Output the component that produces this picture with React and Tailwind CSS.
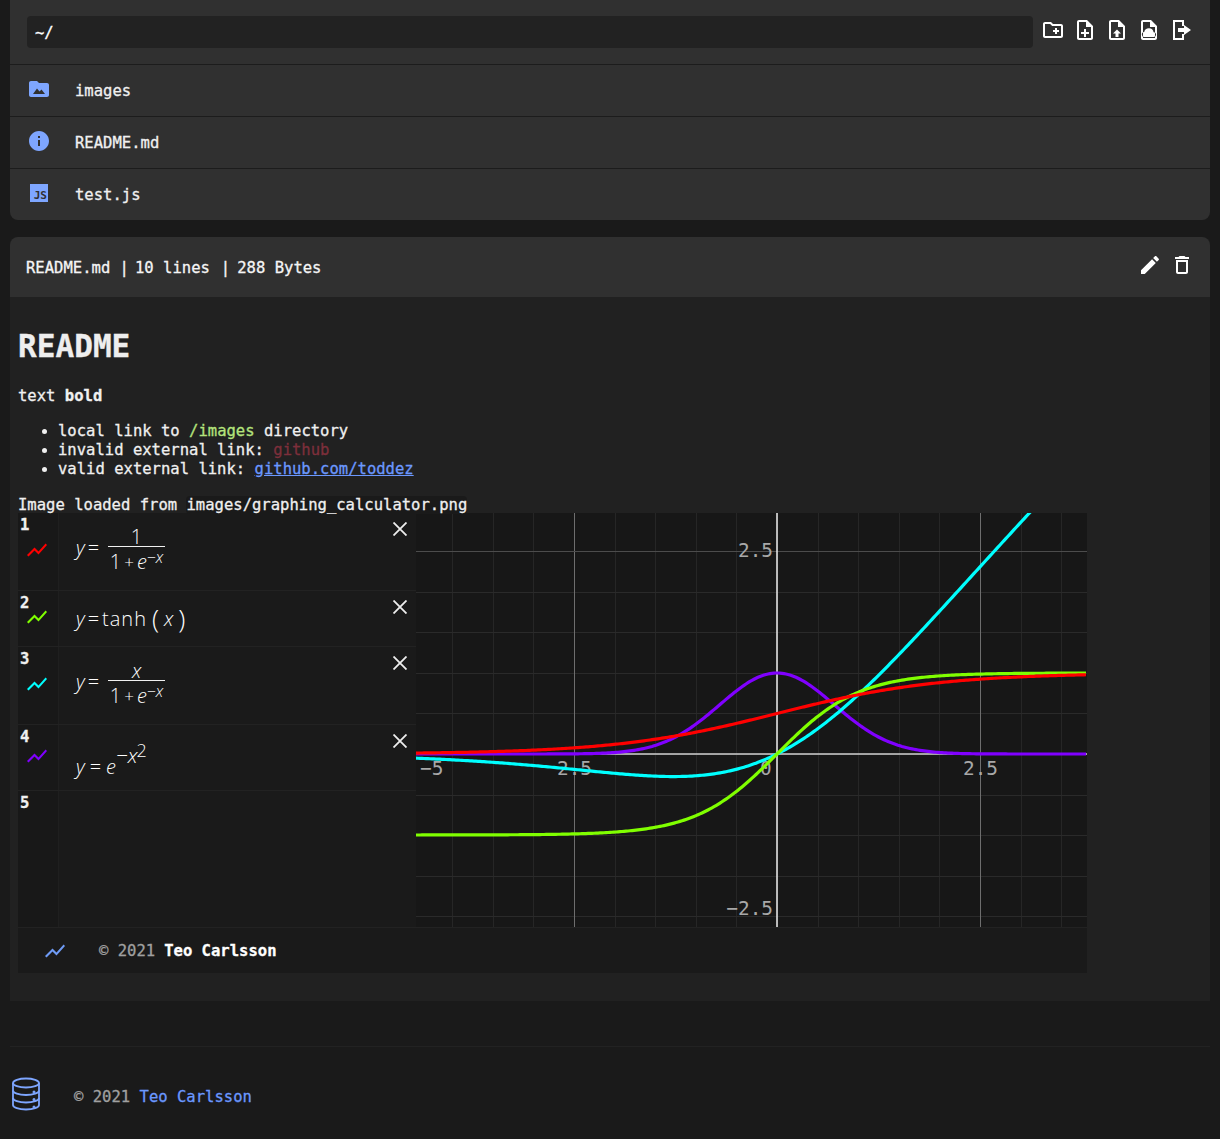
import React from 'react';

const FOLDER_ADD = 'M20 6h-8l-2-2H4c-1.11 0-1.99.89-1.99 2L2 18c0 1.11.89 2 2 2h16c1.11 0 2-.89 2-2V8c0-1.11-.89-2-2-2zm0 12H4V6h5.17l2 2H20v10zm-8-4h2v2h2v-2h2v-2h-2v-2h-2v2h-2z';
const FILE_OUTLINE = 'M14 2H6c-1.1 0-2 .9-2 2v16c0 1.1.89 2 1.99 2H18c1.1 0 2-.9 2-2V8l-6-6zm4 18H6V4h7v5h5v11z';
const PLUS_SMALL = 'M13 11h-2v3H8v2h3v3h2v-3h3v-2h-3z';
const ARROW_UP = 'M12 11.5l-4 4h2.5V19h3v-3.5H16z';
const CLOUD = 'M7.5 19a2.5 2.5 0 0 1-.3-5 4.8 4.8 0 0 1 9.4.2 2.4 2.4 0 0 1 .2 4.8z';
const LOGOUT = 'M4 2h11v6h-2V4H6v16h7v-4h2v6H4zM15 7l7 5-7 5v-3H9v-4h6z';
const EDIT = 'M3 17.25V21h3.75L17.81 9.94l-3.75-3.75L3 17.25zM20.71 7.04c.39-.39.39-1.02 0-1.41l-2.34-2.34c-.39-.39-1.02-.39-1.41 0l-1.83 1.83 3.75 3.75 1.83-1.83z';
const TRASH = 'M6 19c0 1.1.9 2 2 2h8c1.1 0 2-.9 2-2V7H6v12zM8 9h8v10H8V9zm7.5-5l-1-1h-5l-1 1H5v2h14V4z';
const FOLDER = 'M10 4H4c-1.1 0-2 .9-2 2v12c0 1.1.9 2 2 2h16c1.1 0 2-.9 2-2V8c0-1.1-.9-2-2-2h-8l-2-2z';
const INFO = 'M12 2C6.48 2 2 6.48 2 12s4.48 10 10 10 10-4.48 10-10S17.52 2 12 2zm1 15h-2v-6h2v6zm0-8h-2V7h2v2z';
const SHOW_CHART = 'M3.5 18.49l6-6.01 4 4L22 6.92l-1.41-1.41-7.09 7.97-4-4L2 16.99z';

const Icon = ({ d, className = 'w-6 h-6 text-white' }) => (
  <svg viewBox="0 0 24 24" fill="currentColor" className={className}>
    <path d={d} />
  </svg>
);

const FileRow = ({ icon, name, last }) => (
  <div className={`flex items-center pl-[17px] ${last ? 'h-[51px]' : 'h-[52px] border-b border-[#1c1c1c]'}`}>
    <div className="w-6 h-6 mr-6 mb-[3px] flex items-center justify-center">{icon}</div>
    <span className="pt-[2px] text-[#f0f0f0]">{name}</span>
  </div>
);

const Var = ({ children }) => <i className="italic">{children}</i>;

const Frac = ({ top, bottom }) => (
  <div className="flex flex-col items-center w-[57px] ml-[9px]">
    <div className="h-[23px] leading-[26px] border-b border-[#f0f0f0] w-full text-center">{top}</div>
    <div className="h-[25px] pt-[2px] leading-[25px] flex items-start">{bottom}</div>
  </div>
);

const Denominator = () => (
  <>
    <span>1</span>
    <span className="mx-[3px] text-[17px]">+</span>
    <Var>e</Var>
    <span className="text-[16px] leading-[17px] italic">−x</span>
  </>
);

const Formula = ({ n, color, height, children }) => (
  <div className="flex border-b border-[#222222]" style={{ height }}>
    <div className="relative w-[41px] shrink-0 flex items-center justify-center bg-[#181818] border-r border-[#1f1f1f]">
      <span className="absolute left-[2px] top-[2px] font-bold leading-5 text-[#f0f0f0]">{n}</span>
      {color && (
        <svg viewBox="0 0 24 24" fill={color} className="w-[24px] h-[24px] mb-[3px] mr-[2px]">
          <path d={SHOW_CHART} />
        </svg>
      )}
    </div>
    <div className="relative flex-1 flex items-center pl-[17px] text-[20px] font-light text-white [-webkit-text-stroke:0px] [font-family:'Open_Sans',sans-serif]">
      {children}
      {color && (
        <svg viewBox="0 0 14 14" className="absolute right-[9px] top-[9px] w-[14px] h-[14px]" stroke="#eeeeee" strokeWidth="1.8">
          <path d="M0.5 0.5L13.5 13.5M13.5 0.5L0.5 13.5" />
        </svg>
      )}
    </div>
  </div>
);

// chart geometry, in px inside the 671x414 plot
const W = 671;
const H = 414;
const X0 = 361;
const Y0 = 241;
const UNIT = 81.2;

const curve = (fn) => {
  const pts = [];
  for (let px = 0; px <= W; px += 2) {
    const x = (px - X0) / UNIT;
    pts.push(`${px},${(Y0 - fn(x) * 81).toFixed(2)}`);
  }
  return pts.join(' ');
};

const gridXs = Array.from({ length: 18 }, (_, i) => Math.round(X0 + (i - 9) * 40.6) + 0.5).filter((x) => x > 0 && x < W);
const gridYs = Array.from({ length: 11 }, (_, i) => Math.round(38 + i * 40.6 - 40.6) + 0.5);

const Chart = () => (
  <svg width={W} height={H} viewBox={`0 0 ${W} ${H}`} className="block shrink-0 bg-[#171717] [-webkit-text-stroke:0px]">
    {gridXs.map((x) => (
      <line key={x} x1={x} x2={x} y1="0" y2={H} stroke="#262626" />
    ))}
    {gridYs.map((y) => (
      <line key={y} x1="0" x2={W} y1={y} y2={y} stroke="#2a2a2a" />
    ))}
    <line x1="158.5" x2="158.5" y1="0" y2={H} stroke="#6e6e6e" />
    <line x1="564.5" x2="564.5" y1="0" y2={H} stroke="#6e6e6e" />
    <line x1="0" x2={W} y1="38.5" y2="38.5" stroke="#4c4c4c" />
    <line x1="0" x2={W} y1={Y0} y2={Y0} stroke="#d0d0d0" strokeWidth="1.5" />
    <line x1={X0} x2={X0} y1="0" y2={H} stroke="#f0f0f0" strokeWidth="1.5" />
    <g fill="#a8a8a8" fontSize="19.4" fontFamily="'DejaVu Sans Mono', monospace">
      <text x="357" y="44" textAnchor="end">2.5</text>
      <text x="357" y="402" textAnchor="end">−2.5</text>
      <text x="4" y="262">−5</text>
      <text x="141" y="262">2.5</text>
      <text x="344" y="262">0</text>
      <text x="547" y="262">2.5</text>
    </g>
    <g fill="none" strokeWidth="3.2">
      <polyline points={curve((x) => Math.exp(-x * x))} stroke="#8000ff" />
      <polyline points={curve((x) => x / (1 + Math.exp(-x)))} stroke="#00ffff" />
      <polyline points={curve((x) => Math.tanh(x))} stroke="#80ff00" />
      <polyline points={curve((x) => 1 / (1 + Math.exp(-x)))} stroke="#ff0000" />
    </g>
  </svg>
);

const App = () => (
  <div className="min-h-[1139px] bg-[#1a1a1a] px-[10px] text-[15.56px] leading-[19px] text-[#f0f0f0] [-webkit-text-stroke:0.3px] [font-family:'DejaVu_Sans_Mono',monospace]">
    <div className="bg-[#303030] rounded-b-lg">
      <div className="flex items-center gap-2 h-[65px] pl-[17px] pr-[17px] border-b border-[#1c1c1c]">
        <div className="flex-1 h-8 flex items-center px-2 pt-[2px] bg-[#222222] rounded text-white">~/</div>
        <div className="flex gap-2 mb-1">
          <Icon d={FOLDER_ADD} />
          <Icon d={`${FILE_OUTLINE}${PLUS_SMALL}`} />
          <Icon d={`${FILE_OUTLINE}${ARROW_UP}`} />
          <Icon d={`${FILE_OUTLINE}${CLOUD}`} />
          <Icon d={LOGOUT} />
        </div>
      </div>
      <FileRow
        name="images"
        icon={
          <svg viewBox="0 0 24 24" className="w-6 h-6">
            <path d={FOLDER} fill="#7ea6ff" />
            <path d="M6 17l4-5.5 2.5 3 2-2 3.5 4.5z" fill="#303030" />
          </svg>
        }
      />
      <FileRow name="README.md" icon={<Icon d={INFO} className="w-6 h-6 text-[#7ea6ff]" />} />
      <FileRow
        name="test.js"
        last
        icon={
          <div className="w-[18px] h-[18px] bg-[#7ea6ff] flex items-end justify-end pr-[1px] text-[11px] leading-[12px] font-bold text-[#303030] [-webkit-text-stroke:0px]">
            JS
          </div>
        }
      />
    </div>

    <div className="mt-[17px]">
      <div className="flex items-center justify-between h-[60px] pl-4 pr-4 bg-[#303030] rounded-t-lg">
        <span className="pt-[2px] text-[#f5f5f5]">
          README.md |<span className="ml-[6px]">10 lines</span>
          <span className="ml-[11px]">|</span>
          <span className="ml-[7px]">288 Bytes</span>
        </span>
        <div className="flex gap-2 mb-1">
          <Icon d={EDIT} />
          <Icon d={TRASH} />
        </div>
      </div>

      <div className="bg-[#212121] pl-2 pt-[31px] pb-7">
        <h1 className="text-[31.1px] leading-[37px] font-bold text-[#eeeeee]">README</h1>
        <p className="mt-[22px]">
          text <b>bold</b>
        </p>
        <ul className="mt-4 pl-10 list-disc">
          <li>
            local link to <span className="text-[#b4e37c]">/images</span> directory
          </li>
          <li>
            invalid external link: <span className="text-[#7d2f3b]">github</span>
          </li>
          <li>
            valid external link: <span className="text-[#6b98ff] underline">github.com/toddez</span>
          </li>
        </ul>
        <p className="relative z-10 mt-[17px] h-[17px]">
          Image loaded from <span className="bg-[#1a1a1a] rounded-sm">images/graphing_calculator.png</span>
        </p>

        <div className="w-[1069px]">
          <div className="flex h-[414px]">
            <div className="w-[398px] shrink-0 flex flex-col bg-[#1a1a1a]">
              <Formula n="1" color="#ff0000" height={78}>
                <div className="flex items-center mb-2">
                  <Var>y</Var>
                  <span className="ml-[3px]">=</span>
                  <Frac top="1" bottom={<Denominator />} />
                </div>
              </Formula>
              <Formula n="2" color="#80ff00" height={56}>
                <Var>y</Var>
                <span className="mx-[3px]">=</span>
                <span className="tracking-[1px]">tanh</span>
                <span className="text-[26px] font-extralight mx-[5px]">(</span>
                <Var>x</Var>
                <span className="text-[26px] font-extralight ml-[5px]">)</span>
              </Formula>
              <Formula n="3" color="#00ffff" height={78}>
                <div className="flex items-center mb-2">
                  <Var>y</Var>
                  <span className="ml-[3px]">=</span>
                  <Frac top={<Var>x</Var>} bottom={<Denominator />} />
                </div>
              </Formula>
              <Formula n="4" color="#8000ff" height={66}>
                <div className="flex items-start pt-[4px]">
                  <div className="flex items-baseline mt-[14px]">
                    <Var>y</Var>
                    <span className="mx-[5px]">=</span>
                    <Var>e</Var>
                  </div>
                  <span className="italic text-[21px] leading-[22px] mt-[1px]">−x</span>
                  <span className="text-[18px] leading-[18px] -ml-px -mt-[2px]">2</span>
                </div>
              </Formula>
              <div className="flex flex-1">
                <div className="relative w-[41px] bg-[#181818] border-r border-[#1f1f1f]">
                  <span className="absolute left-[2px] top-[2px] font-bold leading-5 text-[#f0f0f0]">5</span>
                </div>
              </div>
            </div>
            <Chart />
          </div>
          <div className="flex items-center h-[46px] pt-px bg-[#1a1a1a] border-t border-[#222222]">
            <Icon d={SHOW_CHART} className="w-6 h-6 ml-[25px] mr-8 text-[#6f9bf5]" />
            <span className="text-[#a0a0a0]">© 2021 </span>
            <b className="ml-[9px] text-white">Teo Carlsson</b>
          </div>
        </div>
      </div>
    </div>

    <div className="mt-[45px] border-t border-[#222222] h-[93px] flex items-center">
      <svg viewBox="0 0 30 34" fill="none" stroke="#7ea6ff" strokeWidth="1.8" className="w-[30px] h-[34px] ml-px mt-[2px]">
        <ellipse cx="15" cy="6" rx="13" ry="4.5" />
        <path d="M2 6v22c0 2.5 5.8 4.5 13 4.5s13-2 13-4.5V6" />
        <path d="M2 13.5c0 2.5 5.8 4.5 13 4.5s13-2 13-4.5" />
        <path d="M2 21c0 2.5 5.8 4.5 13 4.5s13-2 13-4.5" />
        <circle cx="23" cy="15" r="0.6" fill="#7ea6ff" />
        <circle cx="23" cy="22.5" r="0.6" fill="#7ea6ff" />
        <circle cx="23" cy="30" r="0.6" fill="#7ea6ff" />
      </svg>
      <div className="ml-[33px] mt-2">
        <span className="text-[#a0a0a0]">© 2021 </span>
        <span className="text-[#6b98ff]">Teo Carlsson</span>
      </div>
    </div>
  </div>
);

export default App;
